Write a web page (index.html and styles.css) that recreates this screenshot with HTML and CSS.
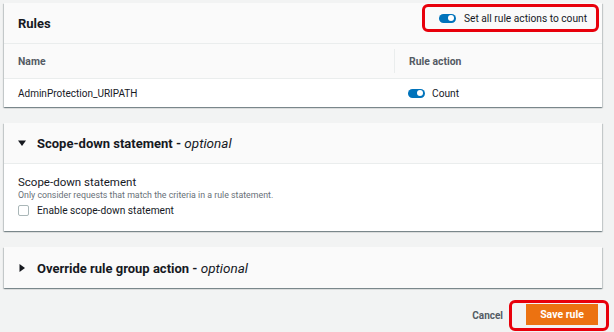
FILE: index.html
```html
<!DOCTYPE html>
<html lang="en">
  <head>
    <meta charset="UTF-8" />
    <title>Rule group - Rules</title>
    <link rel="stylesheet" href="styles.css">
  </head>
  <body>
    <div class="card">
      <div class="card-header">
        <h2>Rules</h2>
        <span class="highlight toggle-all">
          <span class="toggle on"></span>
          <span class="toggle-label">Set all rule actions to count</span>
        </span>
      </div>
      <div class="table">
        <div class="table-head">
          <div class="col-name">Name</div>
          <div class="col-action"><span class="divider"></span>Rule action</div>
        </div>
        <div class="table-row">
          <div class="col-name">AdminProtection_URIPATH</div>
          <div class="col-action">
            <span class="toggle on"></span>
            <span class="toggle-label">Count</span>
          </div>
        </div>
      </div>
    </div>

    <div class="card">
      <div class="card-header expand">
        <svg class="caret" width="8" height="8" viewBox="0 0 8 8"><polygon points="0,1.5 8,1.5 4,7" fill="#16191f" /></svg>
        <h2>Scope-down statement - <i>optional</i></h2>
      </div>
      <div class="card-body">
        <div class="field-label">Scope-down statement</div>
        <div class="field-desc">Only consider requests that match the criteria in a rule statement.</div>
        <label class="checkbox-row">
          <span class="checkbox"></span>
          Enable scope-down statement
        </label>
      </div>
    </div>

    <div class="card">
      <div class="card-header expand closed">
        <svg class="caret" width="8" height="8" viewBox="0 0 8 8"><polygon points="1.5,0 7,4 1.5,8" fill="#16191f" /></svg>
        <h2>Override rule group action - <i>optional</i></h2>
      </div>
    </div>

    <div class="footer">
      <button class="btn-link">Cancel</button>
      <span class="highlight save-wrap">
        <button class="btn-primary">Save rule</button>
      </span>
    </div>
  </body>
</html>
```

FILE: styles.css
```css
body {
  margin: 0;
  padding: 3px 12px 0 4px;
  background-color: #f2f3f3;
  font-family: Roboto, Arial, sans-serif;
  font-size: 10px;
  color: #16191f;
  height: 332px;
  box-sizing: border-box;
  overflow: hidden;
}
.card {
  background-color: white;
  box-shadow: 0 1px 1px 0 rgba(0, 28, 36, 0.3), 1px 1px 1px 0 rgba(0, 28, 36, 0.15),
    -1px 1px 1px 0 rgba(0, 28, 36, 0.15);
  margin-bottom: 16px;
}
.card-header {
  display: flex;
  align-items: center;
  justify-content: space-between;
  height: 40px;
  padding: 0 3px 0 14px;
  background-color: #fafafa;
  border-bottom: 1px solid #eaeded;
}
.card-header h2 {
  margin: 0;
  font-size: 13px;
  font-weight: 700;
}
.card-header h2 i {
  font-weight: 400;
  font-size: 13.5px;
}
.card-header.expand {
  justify-content: flex-start;
  gap: 11px;
  padding-left: 14px;
}
.card-header.closed {
  height: 41px;
  border-bottom: none;
}
.highlight {
  border: 3px solid #e8000b;
  border-radius: 6px;
}
.toggle-all {
  display: flex;
  align-items: center;
  gap: 8px;
  align-self: flex-start;
  margin-top: 1px;
  height: 22px;
  padding: 0 9px 0 14px;
}
.toggle {
  display: inline-block;
  position: relative;
  width: 17px;
  height: 9px;
  border-radius: 5px;
  background-color: #0073bb;
}
.toggle.on::after {
  content: "";
  position: absolute;
  right: 2px;
  top: 1.5px;
  width: 6px;
  height: 6px;
  border-radius: 50%;
  background-color: white;
}
.toggle-label {
  font-size: 10.2px;
  color: #16191f;
}
.table-head,
.table-row {
  display: flex;
  align-items: center;
}
.table-head {
  height: 34px;
  background-color: #fafafa;
  border-bottom: 1px solid #eaeded;
  font-size: 10.4px;
  font-weight: 700;
  color: #545b64;
}
.table-row {
  height: 28px;
}
.col-name {
  flex: 0 0 390px;
  padding-left: 14px;
  box-sizing: border-box;
}
.col-action {
  display: flex;
  align-items: center;
  gap: 7px;
  padding-left: 14px;
}
.table-head .col-action {
  position: relative;
  padding-left: 15px;
}
.divider {
  position: absolute;
  left: 0;
  top: -6px;
  width: 1px;
  height: 24px;
  background-color: #eaeded;
}
.card-body {
  height: 67px;
  box-sizing: border-box;
  padding: 11px 14px 0;
}
.field-label {
  font-size: 11.5px;
}
.field-desc {
  font-size: 8.8px;
  color: #687078;
  margin-top: 1px;
}
.checkbox-row {
  display: flex;
  align-items: center;
  gap: 8px;
  margin-top: 5px;
  font-size: 10.2px;
}
.checkbox {
  width: 9px;
  height: 9px;
  border: 1px solid #aab7b8;
  border-radius: 2px;
  background-color: white;
}
.footer {
  display: flex;
  justify-content: flex-end;
  align-items: center;
  gap: 2px;
  margin-right: -7px;
  margin-top: -4px;
}
.btn-link {
  background: none;
  border: none;
  font-family: inherit;
  font-size: 10px;
  font-weight: 700;
  color: #545b64;
  padding: 0 4px;
}
.save-wrap {
  display: flex;
  padding: 1px 8px 3px 14px;
}
.btn-primary {
  background-color: #ec7211;
  color: white;
  border: none;
  font-family: inherit;
  font-size: 10.5px;
  font-weight: 700;
  width: 72px;
  height: 21px;
  padding: 0;
}
```
